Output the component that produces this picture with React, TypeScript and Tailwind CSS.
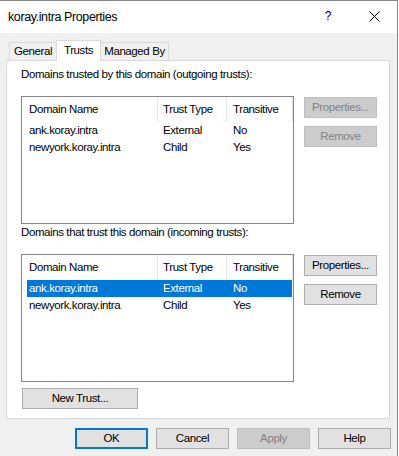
type Row = { name: string; type: string; transitive: string };

const outgoing: Row[] = [
  { name: "ank.koray.intra", type: "External", transitive: "No" },
  { name: "newyork.koray.intra", type: "Child", transitive: "Yes" },
];

const incoming: Row[] = [
  { name: "ank.koray.intra", type: "External", transitive: "No" },
  { name: "newyork.koray.intra", type: "Child", transitive: "Yes" },
];

const Btn = ({
  label,
  disabled,
  primary,
  className = "",
}: {
  label: string;
  disabled?: boolean;
  primary?: boolean;
  className?: string;
}) => {
  let look = "border border-[#adadad] bg-[#e1e1e1] text-black";
  if (disabled) look = "border border-[#bfbfbf] bg-[#cccccc] text-[#838383]";
  if (primary) look = "border-2 border-[#0078d7] bg-[#e1e1e1] text-black";
  return (
    <div
      className={`h-[21px] flex items-center justify-center leading-none ${look} ${className}`}
    >
      {label}
    </div>
  );
};

const ListView = ({ rows, selected }: { rows: Row[]; selected?: number }) => {
  return (
    <div className="w-[273px] h-[128px] border border-[#828790] bg-white">
      <div className="flex h-[25px]">
        <div className="w-[136px] flex items-center pl-[7px] pt-[1px] border-r border-[#e5e5e5]">
          Domain Name
        </div>
        <div className="w-[69px] flex items-center pl-[5px] pt-[1px] border-r border-[#e5e5e5]">
          Trust Type
        </div>
        <div className="w-[66px] flex items-center pl-[6px] pt-[1px] border-r border-[#e5e5e5]">
          Transitive
        </div>
      </div>
      {rows.map((r, i) => (
        <div
          key={r.name}
          className={`flex h-[17px] ml-[5px] w-[265px] items-center ${
            i === selected ? "bg-[#0078d7] text-white" : "text-black"
          }`}
        >
          <div className="w-[131px] pl-[2px]">{r.name}</div>
          <div className="w-[69px] pl-[5px]">{r.type}</div>
          <div className="w-[65px] pl-[6px]">{r.transitive}</div>
        </div>
      ))}
    </div>
  );
};

const TrustSection = ({
  label,
  rows,
  selected,
  enabled,
}: {
  label: string;
  rows: Row[];
  selected?: number;
  enabled: boolean;
}) => (
  <>
    <div className="leading-[13px]">{label}</div>
    <div className="flex mt-[15px]">
      <ListView rows={rows} selected={selected} />
      <div className="flex flex-col gap-[8px] pt-[1px] ml-[10px]">
        <Btn label="Properties..." disabled={!enabled} className="w-[73px]" />
        <Btn label="Remove" disabled={!enabled} className="w-[73px]" />
      </div>
    </div>
  </>
);

export default function App() {
  return (
    <div className="w-[398px] h-[456px] flex flex-col border-t border-r border-[#888888] bg-[#f0f0f0] text-[11.5px] tracking-[-0.4px] text-black font-['Liberation_Sans',Arial,sans-serif]">
      {/* title bar */}
      <div className="h-[32px] flex bg-white">
        <div className="flex-1 flex items-center pl-[8px] text-[12.5px] tracking-[-0.4px]">
          koray.intra Properties
        </div>
        <div className="w-[46px] flex items-center justify-center text-[12px] pb-[2px]">
          ?
        </div>
        <div className="w-[46px] flex items-center justify-center pb-[2px]">
          <svg width="11" height="11" viewBox="0 0 11 11">
            <path d="M0.5 0.5 L10.5 10.5 M10.5 0.5 L0.5 10.5" stroke="#000" strokeWidth="1" />
          </svg>
        </div>
      </div>

      <div className="flex-1 pl-[6px] pt-[7px]">
        {/* tabs */}
        <div className="flex items-end h-[20px]">
          <div className="ml-[3px] w-[47px] h-[18px] flex items-center justify-center border-l border-t border-[#d9d9d9]">
            General
          </div>
          <div className="relative z-10 w-[45px] h-[21px] -mb-[1px] flex items-center justify-center pb-[1px] border-l border-t border-r border-[#d9d9d9] bg-white">
            Trusts
          </div>
          <div className="w-[68px] h-[18px] flex items-center justify-center border-t border-r border-[#d9d9d9]">
            Managed By
          </div>
        </div>

        {/* panel */}
        <div className="w-[384px] h-[359px] border border-[#d9d9d9] bg-white pt-[7px] pl-[14px]">
          <TrustSection
            label="Domains trusted by this domain (outgoing trusts):"
            rows={outgoing}
            enabled={false}
          />
          <div className="mt-[2px]">
            <TrustSection
              label="Domains that trust this domain (incoming trusts):"
              rows={incoming}
              selected={0}
              enabled
            />
          </div>
          <Btn label="New Trust..." className="w-[116px] mt-[6px] ml-[1px]" />
        </div>

        {/* dialog buttons */}
        <div className="flex gap-[8px] mt-[9px] ml-[69px]">
          <Btn label="OK" primary className="w-[73px]" />
          <Btn label="Cancel" className="w-[73px]" />
          <Btn label="Apply" disabled className="w-[73px]" />
          <Btn label="Help" className="w-[73px]" />
        </div>
      </div>
    </div>
  );
}
